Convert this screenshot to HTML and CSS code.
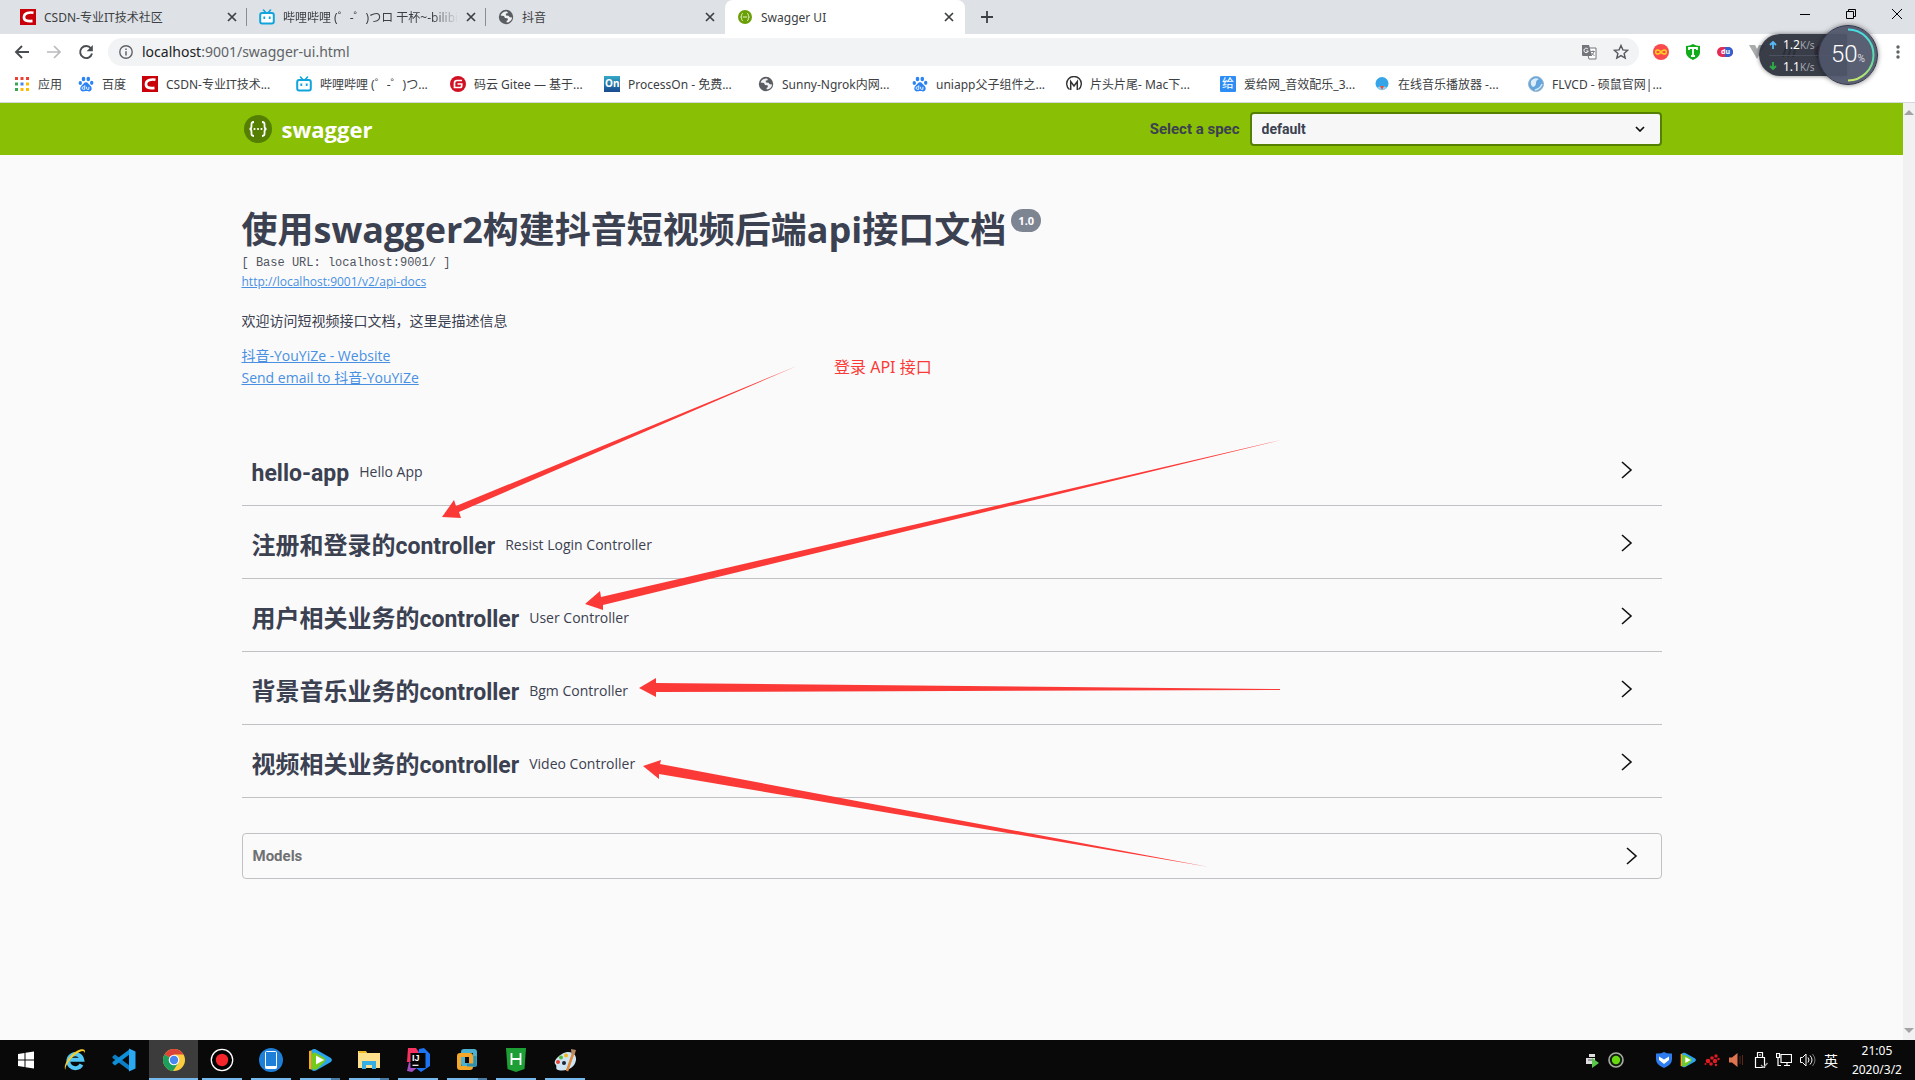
FILE: index.html
```html
<!DOCTYPE html>
<html lang="zh-CN">
<head>
<meta charset="utf-8">
<meta name="viewport" content="width=device-width, initial-scale=1">
<title>Swagger UI</title>
<link rel="stylesheet" href="styles.css">
</head>
<body>
<svg class="defs" aria-hidden="true">
  <defs>
    <symbol id="i-csdn" viewBox="0 0 16 16"><path fill="#c9000a" d="M0 0h16v16H0z"/><path d="M13.500 3.800C9.500 3 4.500 3.800 4 7.600c-.500 4 3 5 8.500 4.300" fill="none" stroke="#fff" stroke-width="2.600"/></symbol>
    <symbol id="i-bili" viewBox="0 0 16 16"><path d="M4.500 1l2 2.300M11.500 1l-2 2.300" stroke="#12a4dc" stroke-width="1.600" stroke-linecap="round"/><rect x="1.200" y="4" width="13.600" height="10.600" rx="2" fill="#fff" stroke="#12a4dc" stroke-width="2"/><path d="M5.300 7.500v2.500M10.700 7.500v2.500" stroke="#12a4dc" stroke-width="1.800"/></symbol>
    <symbol id="i-globe" viewBox="0 0 16 16"><circle cx="8" cy="8" r="7.200" fill="#5a5e63"/><path d="M9 2.500C6 2 3.500 4 2.600 6.500l3.400.4 1 2 2.500.4.500 1.700-1.500 1 .3 1.600c3-.3 5-2.300 5.300-5l-2.300-.4-1.300-1.400-2.500-.3-.3-1.700 2.300-.8z" fill="#fff" opacity=".92"/><path d="M3 9l2.500 1.200.5 2.600z" fill="#5a5e63"/></symbol>
    <symbol id="i-baidu" viewBox="0 0 16 16"><g fill="#2b83f6"><ellipse cx="2.300" cy="7" rx="1.700" ry="2.100"/><ellipse cx="5.500" cy="3" rx="1.800" ry="2.300"/><ellipse cx="10.300" cy="3" rx="1.800" ry="2.300"/><ellipse cx="13.700" cy="6.800" rx="1.700" ry="2.100"/><path d="M8 6.300c2 0 2.700 2 4.200 3.200 2.800 2.300 1.300 6-1.200 5.900-1.300 0-1.600-.4-3-.4s-1.700.4-3 .4c-2.500.1-4-3.600-1.200-5.900C5.300 8.300 6 6.300 8 6.300z"/></g><path d="M6.800 9.300v4H5.300a1.200 1.200 0 010-2.500h1.500M8.600 10.800v1.700q0 .8.800.8h1.500v-2.500" fill="none" stroke="#fff" stroke-width=".9"/></symbol>
    <symbol id="i-x" viewBox="0 0 10 10"><path d="M1 1l8 8M9 1L1 9" stroke="#3c4043" stroke-width="1.700"/></symbol>
    <symbol id="i-player" viewBox="0 0 24 24"><path d="M1 3l4-1v20l-4-1z" fill="#ffae00"/><path d="M3.500 3.500C3.500 1 6 .5 8 1.500L22 9.500c2.500 1.500 2.500 3.500 0 5L8 22.500c-2 1-4.500.5-4.500-2z" fill="#2aa4ee"/><path d="M4 7c0-2 2-3 4-2l8 4.500c2 1.500 2 3.500 0 5L9 21c-2 1-5 1-5-1z" fill="#75cb1c"/><path d="M8 7.500l8 4.500-8 4.500z" fill="#fff"/></symbol>
    <symbol id="i-chevron" viewBox="0 0 12 20"><path d="M1 2l9 8-9 8" fill="none" stroke="#111" stroke-width="1.600"/></symbol>
  </defs>
</svg>

<header class="browser">
  <div class="tabstrip">
    <div class="tab"><svg class="ic"><use href="#i-csdn"/></svg><span class="tab-title">CSDN-专业IT技术社区</span><button class="close" aria-label="关闭"><svg><use href="#i-x"/></svg></button></div>
    <div class="tab"><svg class="ic"><use href="#i-bili"/></svg><span class="tab-title fade">哔哩哔哩 (゜-゜)つロ 干杯~-bilibili</span><button class="close" aria-label="关闭"><svg><use href="#i-x"/></svg></button></div>
    <div class="tab last"><svg class="ic"><use href="#i-globe"/></svg><span class="tab-title">抖音</span><button class="close" aria-label="关闭"><svg><use href="#i-x"/></svg></button></div>
    <div class="tab active"><svg class="ic" viewBox="0 0 16 16"><circle cx="8" cy="8" r="7" fill="#6a9f06"/><path d="M5.800 4.500c-1.500 0-1 1.500-1.200 2.500-.1.600-.5 1-1 1 .5 0 .9.400 1 1 .2 1-.3 2.500 1.200 2.500M10.200 4.500c1.500 0 1 1.500 1.200 2.500.1.600.5 1 1 1-.5 0-.9.400-1 1-.2 1 .3 2.500-1.200 2.500M5.800 8h4.400" fill="none" stroke="#e6f2c8"/></svg><span class="tab-title">Swagger UI</span><button class="close" aria-label="关闭"><svg><use href="#i-x"/></svg></button></div>
    <button class="newtab" aria-label="新标签页"><svg viewBox="0 0 12 12"><path d="M6 0v12M0 6h12" stroke="#3c4043" stroke-width="1.800"/></svg></button>
    <div class="wincontrols">
      <button aria-label="最小化"><svg viewBox="0 0 12 12"><path d="M1 6.500h10" stroke="#000"/></svg></button>
      <button aria-label="还原"><svg viewBox="0 0 12 12"><path d="M1.500 3.500h7v7h-7zM3.500 3.500v-2h7v7h-2" fill="none" stroke="#000"/></svg></button>
      <button aria-label="关闭窗口"><svg viewBox="0 0 12 12"><path d="M1 1l10 10M11 1L1 11" stroke="#000"/></svg></button>
    </div>
  </div>

  <div class="toolbar">
    <button class="nav" aria-label="后退"><svg viewBox="0 0 16 16"><path d="M15 8H2M8 2L2 8l6 6" fill="none" stroke="#4a4d51" stroke-width="1.900"/></svg></button>
    <button class="nav" aria-label="前进"><svg viewBox="0 0 16 16"><path d="M1 8h13M8 2l6 6-6 6" fill="none" stroke="#b9bbbe" stroke-width="1.700"/></svg></button>
    <button class="nav" aria-label="重新加载"><svg viewBox="0 0 16 16"><path d="M13 4.500A6 6 0 1014 9.500" fill="none" stroke="#4a4d51" stroke-width="1.900"/><path d="M14.800 1v6.200H8.600z" fill="#4a4d51"/></svg></button>
    <div class="address">
      <svg class="info-ic" viewBox="0 0 14 14"><circle cx="7" cy="7" r="6.200" fill="none" stroke="#5f6368" stroke-width="1.400"/><path d="M7 6.200V10.500M7 3.500v1.500" stroke="#5f6368" stroke-width="1.500"/></svg>
      <span class="url"><span class="host">localhost</span>:9001/swagger-ui.html</span>
      <svg class="ic" viewBox="0 0 16 16"><path d="M5 4h10v11H8z" fill="#fff" stroke="#72767b"/><path d="M1 1h7l3 11H2Q1 12 1 11z" fill="#72767b"/><path d="M7 5.200A2.200 2.200 0 107.300 7H5.300" fill="none" stroke="#fff"/><path d="M9.800 7.500h4M12 6.500v1M13 7.800q-1 2.500-3 4M10.500 9l3 3" fill="none" stroke="#72767b" stroke-width=".9"/></svg>
      <svg class="ic" viewBox="0 0 16 16"><path d="M8 1.500l1.900 4.400 4.800.4-3.600 3.100 1.100 4.700L8 11.600l-4.200 2.500 1.100-4.700L1.300 6.300l4.800-.4z" fill="none" stroke="#55595e" stroke-width="1.400"/></svg>
    </div>
    <div class="extensions">
      <svg viewBox="0 0 16 16"><circle cx="8" cy="8" r="8" fill="#f94a4d"/><path d="M8 8C6.500 5.500 2.700 5 2.700 8S6.500 10.500 8 8s5.300-3 5.300 0S9.500 10.500 8 8z" fill="none" stroke="#ffd21f" stroke-width="1.500"/></svg>
      <svg viewBox="0 0 16 16"><path d="M1 2q4 0 7-2 3 2 7 2v6c0 4-3 6-7 8-4-2-7-4-7-8z" fill="#12ab1b"/><path d="M4 6V4h8v2M8 4v8M6 12h4" fill="none" stroke="#fff" stroke-width="1.800"/></svg>
      <svg viewBox="0 0 16 16"><rect y="3" width="16" height="10" rx="5" fill="#e52b53"/><path d="M8 3h3a5 5 0 010 10H8z" fill="#2d62d4"/><text x="4" y="10" font-size="7" font-weight="bold" fill="#fff">du</text></svg>
      <svg viewBox="0 0 16 16"><path d="M0 1h6l2 4 2-4h6L8 15z" fill="#a9abad"/></svg>
      <svg viewBox="0 0 16 16"><path d="M2 13L5 3M7 13l3-10M12 13l3-10" stroke="#333" stroke-width="2"/></svg>
      <svg viewBox="0 0 16 16"><circle cx="8" cy="8" r="7" fill="#a3434d"/></svg>
    </div>
    <button class="menu" aria-label="菜单"><svg viewBox="0 0 4 14"><g fill="#5f6368"><circle cx="2" cy="2" r="1.700"/><circle cx="2" cy="7" r="1.700"/><circle cx="2" cy="12" r="1.700"/></g></svg></button>
  </div>

  <nav class="bookmarks">
    <a class="bm short" href="#"><svg class="ic" viewBox="0 0 16 16"><path d="M1 1h3v3H1zM6.500 1h3v3h-3zM12 1h3v3h-3z" fill="#ea4335"/><path d="M1 6.500h3v3H1z" fill="#34a853"/><path d="M6.500 6.500h3v3h-3z" fill="#4285f4"/><path d="M12 6.500h3v3h-3zM12 12h3v3h-3zM6.500 12h3v3h-3z" fill="#fbbc05"/><path d="M1 12h3v3H1z" fill="#34a853"/></svg><span>应用</span></a>
    <a class="bm short" href="#"><svg class="ic"><use href="#i-baidu"/></svg><span>百度</span></a>
    <a class="bm" href="#"><svg class="ic"><use href="#i-csdn"/></svg><span>CSDN-专业IT技术...</span></a>
    <a class="bm" href="#"><svg class="ic"><use href="#i-bili"/></svg><span>哔哩哔哩 (゜-゜)つ...</span></a>
    <a class="bm" href="#"><svg class="ic" viewBox="0 0 16 16"><circle cx="8" cy="8" r="8" fill="#d11123"/><path d="M12 4.500H7Q4.500 4.500 4.500 7v4.500H10q1.700 0 1.700-1.700V8H7.500" fill="none" stroke="#fff" stroke-width="1.700"/></svg><span>码云 Gitee — 基于...</span></a>
    <a class="bm" href="#"><svg class="ic" viewBox="0 0 16 16"><defs><linearGradient id="on" x2="0" y2="1"><stop stop-color="#35a9c6"/><stop offset="1" stop-color="#184a8e"/></linearGradient></defs><path d="M0 0h16v16H0z" fill="url(#on)"/><text x="1" y="11" font-size="10" font-weight="bold" fill="#fff">On</text></svg><span>ProcessOn - 免费...</span></a>
    <a class="bm" href="#"><svg class="ic"><use href="#i-globe"/></svg><span>Sunny-Ngrok内网...</span></a>
    <a class="bm" href="#"><svg class="ic"><use href="#i-baidu"/></svg><span>uniapp父子组件之...</span></a>
    <a class="bm" href="#"><svg class="ic" viewBox="0 0 16 16"><path d="M3.500 13.500A7.300 7.300 0 1112.500 13.500" fill="none" stroke="#333" stroke-width="1.400"/><path d="M4.700 14V5.500L8 10l3.300-4.500V14" fill="none" stroke="#333" stroke-width="1.500"/></svg><span>片头片尾- Mac下...</span></a>
    <a class="bm" href="#"><svg class="ic" viewBox="0 0 16 16"><rect width="16" height="16" rx="1" fill="#2e8df5"/><text x="2" y="12" font-size="12" fill="#fff">给</text></svg><span>爱给网_音效配乐_3...</span></a>
    <a class="bm" href="#"><svg class="ic" viewBox="0 0 16 16"><circle cx="8" cy="7.500" r="6.500" fill="#35a5e8"/><path d="M3 11.500q5-3 10 0Q8 17 3 11.500z" fill="#8fd0f4"/><path d="M6 10h4l-2 4z" fill="#f04b36"/></svg><span>在线音乐播放器 -...</span></a>
    <a class="bm" href="#"><svg class="ic" viewBox="0 0 16 16"><circle cx="8" cy="8" r="7.500" fill="#63a5dc" stroke="#9bb6cd"/><path d="M3 5q3-4 8-2-3 1-3 4t-3 4Q2 9 3 5z" fill="#dceefb"/><path d="M7 14q5-1 7-6" stroke="#cfe7f8" fill="none" stroke-width="1.500"/></svg><span>FLVCD - 硕鼠官网|...</span></a>
  </nav>
</header>

<aside class="netmeter">
  <div class="rates">
    <div class="rate"><svg viewBox="0 0 8 8"><path d="M4 8V1M1 4l3-3 3 3" fill="none" stroke="#57b9f7" stroke-width="1.800"/></svg><span>1.2<small>K/s</small></span></div>
    <div class="rate"><svg viewBox="0 0 8 8"><path d="M4 0v7M1 4l3 3 3-3" fill="none" stroke="#2fae45" stroke-width="1.800"/></svg><span>1.1<small>K/s</small></span></div>
  </div>
  <div class="dial">
    <svg viewBox="0 0 60 60"><defs><linearGradient id="arc" x2="0" y2="1"><stop stop-color="#45e0e6"/><stop offset=".6" stop-color="#5fd9a0"/><stop offset="1" stop-color="#c8e86a"/></linearGradient></defs><circle cx="30" cy="30" r="29.500" fill="#50566a" fill-opacity=".94" stroke="#33374a"/><path d="M30 4.500a25.500 25.500 0 010 51" fill="none" stroke="url(#arc)" stroke-width="2"/></svg>
    <span>50<small>%</small></span>
  </div>
</aside>

<div class="viewport">
  <div class="page">
    <div class="topbar">
      <div class="wrapper topbar-row">
        <a class="logo" href="#"><svg viewBox="0 0 28 28"><circle cx="14" cy="14" r="14" fill="#547f00"/><path d="M10 7c-3 0-2.500 2-2.500 4 0 1.800-.5 3-2 3 1.500 0 2 1.200 2 3 0 2-.5 4 2.500 4M18 7c3 0 2.500 2 2.500 4 0 1.800.5 3 2 3-1.500 0-2 1.200-2 3 0 2 .5 4-2.500 4" fill="none" stroke="#fff" stroke-width="1.800"/><g fill="#fff"><circle cx="10.500" cy="14" r="1.100"/><circle cx="14" cy="14" r="1.100"/><circle cx="17.500" cy="14" r="1.100"/></g></svg><span>swagger</span></a>
        <label class="spec-label" for="spec">Select a spec</label>
        <div class="select-box">
          <select id="spec"><option>default</option></select>
          <svg viewBox="0 0 10 6"><path d="M1 1l4 4 4-4" fill="none" stroke="#111" stroke-width="1.700"/></svg>
        </div>
      </div>
    </div>

    <main class="wrapper">
      <section class="info">
        <div class="title-row"><h1>使用swagger2构建抖音短视频后端api接口文档</h1><span class="version">1.0</span></div>
        <pre class="base-url">[ Base URL: localhost:9001/ ]</pre>
        <a class="docs" href="#">http://localhost:9001/v2/api-docs</a>
        <p class="desc">欢迎访问短视频接口文档，这里是描述信息</p>
        <a class="contact" href="#">抖音-YouYiZe - Website</a>
        <a class="contact" href="#">Send email to 抖音-YouYiZe</a>
      </section>

      <section class="tags">
        <div class="tag"><h2><span>hello-app</span></h2><small>Hello App</small><button aria-label="展开"><svg><use href="#i-chevron"/></svg></button></div>
        <div class="tag"><h2>注册和登录的<span>controller</span></h2><small>Resist Login Controller</small><button aria-label="展开"><svg><use href="#i-chevron"/></svg></button></div>
        <div class="tag"><h2>用户相关业务的<span>controller</span></h2><small>User Controller</small><button aria-label="展开"><svg><use href="#i-chevron"/></svg></button></div>
        <div class="tag"><h2>背景音乐业务的<span>controller</span></h2><small>Bgm Controller</small><button aria-label="展开"><svg><use href="#i-chevron"/></svg></button></div>
        <div class="tag"><h2>视频相关业务的<span>controller</span></h2><small>Video Controller</small><button aria-label="展开"><svg><use href="#i-chevron"/></svg></button></div>
      </section>

      <section class="models"><h2>Models</h2><button aria-label="展开"><svg><use href="#i-chevron"/></svg></button></section>
    </main>

    <svg class="annotations" viewBox="0 0 1200 780" aria-hidden="true">
      <g fill="#fb3a38">
        <path d="M442 414L454 397 456 403 797 263 459 409 461 415z"/>
        <path d="M585 501L600 488 601 494 1281 337 603 502 603 507z"/>
        <path d="M639 585L656 575V580L1280 586V587L656 589V594z"/>
        <path d="M643 663L661 657 660 661 1209 764 659 671 659 676z"/>
      </g>
    </svg>
    <p class="note">登录 API 接口</p>
  </div>
  <div class="scrollbar">
    <svg viewBox="0 0 10 6"><path d="M0 6l5-5 5 5z" fill="#a3a3a3"/></svg>
    <svg viewBox="0 0 10 6"><path d="M0 0l5 5 5-5z" fill="#a3a3a3"/></svg>
  </div>
</div>

<footer class="taskbar">
  <button class="app plain" aria-label="开始"><svg class="start" viewBox="0 0 16 18"><path d="M0 3l6.500-1v6.500H0zM7.500 1.800L16 .5v8H7.500zM0 9.500h6.500V16L0 15zM7.500 9.500H16v8l-8.500-1.300z" fill="#fff"/></svg></button>
  <button class="app plain" aria-label="Internet Explorer"><svg viewBox="0 0 24 24"><path d="M18.500 16.500a7 7 0 11.700-4.700H6" fill="none" stroke="#52c6f4" stroke-width="4"/><path d="M2.500 22C-1 18 8 4 17 1.500c5-1.200 5.500 1 4.500 4 0-3-2-3-5-1.500C9 7.500 1.500 18 2.500 22z" fill="#f8cd2a"/></svg></button>
  <button class="app plain" aria-label="Visual Studio Code"><svg viewBox="0 0 24 24"><path d="M.5 8.500L3 6.500l15 11.500v5L.5 10z" fill="#0d7dc4"/><path d="M.5 15.500L3 17.500 18 6V1L.5 14z" fill="#0e8fd8"/><path d="M17 .5l6.500 3v17l-6.500 3z" fill="#2aa8f2"/></svg></button>
  <button class="app current" aria-label="Chrome"><svg viewBox="0 0 24 24"><circle cx="12" cy="12" r="11" fill="#fbcd3e"/><path d="M12 12L2.500 6.500A11 11 0 0121.500 6.500H12z" fill="#dc4437"/><path d="M2.500 6.500A11 11 0 0011 23l5.500-8.500L12 12z" fill="#1c9f5a"/><circle cx="12" cy="12" r="5.300" fill="#fff"/><circle cx="12" cy="12" r="4.200" fill="#4a87f0"/></svg></button>
  <button class="app" aria-label="录屏"><svg viewBox="0 0 24 24"><circle cx="12" cy="12" r="10.700" fill="#000" stroke="#fff" stroke-width="1.300"/><circle cx="12" cy="12" r="6.200" fill="#f4252b"/></svg></button>
  <button class="app" aria-label="手机助手"><svg viewBox="0 0 24 24"><circle cx="12" cy="12" r="12" fill="#1d7fd8"/><rect x="6.500" y="3.500" width="11" height="17" rx="1" fill="#1d7fd8" stroke="#fff"/><path d="M6.500 18h11v2.500h-11z" fill="#fff"/></svg></button>
  <button class="app multi" aria-label="播放器"><svg><use href="#i-player"/></svg></button>
  <button class="app multi" aria-label="文件资源管理器"><svg viewBox="0 0 24 24"><path d="M1 3h8l1 2h13v15H1z" fill="#fde08b"/><path d="M2 3h7v2H2z" fill="#f1b822"/><path d="M5 21v-8h14v8h-4v-4H9v4z" fill="#37aee3"/></svg></button>
  <button class="app" aria-label="IntelliJ IDEA"><svg viewBox="0 0 24 24"><path d="M2 0h8l4 6-8 8H1z" fill="#f83360"/><path d="M13 1l5-1 6 6v12l-9 6-5-4z" fill="#1c74f3"/><path d="M3 14l9 5-6 5-5-1z" fill="#a050c0"/><path d="M4.500 5h15v15h-15z" fill="#050505"/><text x="6" y="13" font-size="9" font-weight="bold" fill="#fff">IJ</text><path d="M6.500 17.300h6" stroke="#fff" stroke-width="1.200"/></svg></button>
  <button class="app multi" aria-label="VMware"><svg viewBox="0 0 24 24"><rect x="8" y="3" width="12" height="14" rx="1" fill="none" stroke="#4cb0d0" stroke-width="4"/><rect x="4" y="7" width="12" height="13" rx="1" fill="none" stroke="#f5a72a" stroke-width="4"/><path d="M20 8v9h-8" fill="none" stroke="#318fae" stroke-width="3"/></svg></button>
  <button class="app" aria-label="HBuilder X"><svg viewBox="0 0 24 24"><path d="M2 0h20l-1.500 21L12 24l-8.500-3z" fill="#1d9f36"/><path d="M7.500 5v12M16.500 5v12M7.500 11h9" stroke="#fff" stroke-width="1.800"/></svg></button>
  <button class="app" aria-label="画图"><svg viewBox="0 0 24 24"><path d="M9 6c8-5 15 0 14 6-1 8-10 12-18 10-3-1-1-3-2-5-3-2-1-7 6-11z" fill="#cfe4f3"/><circle cx="8" cy="9.500" r="2" fill="#4fbb3d"/><circle cx="13" cy="7.500" r="2" fill="#f4b71c"/><circle cx="5" cy="14" r="2" fill="#e64034"/><circle cx="11" cy="15" r="2" fill="#1c2733"/><path d="M21 3l-7 20" stroke="#de8a3a" stroke-width="2.500"/><path d="M18 1l5 1-1.500 5-3-1z" fill="#b78a5e"/></svg></button>

  <div class="tray">
    <svg viewBox="0 0 16 16"><path d="M5 2h6v3H5zM2 6h9v6H2z" fill="#ddd"/><path d="M4 8h5" stroke="#555"/><path d="M8 6l7 5-7 5z" fill="#59c64b"/></svg>
    <svg viewBox="0 0 16 16"><circle cx="8" cy="8" r="7" fill="#10210a" stroke="#aaa" stroke-width="1.600"/><circle cx="8" cy="8" r="4.200" fill="#68d910"/></svg>
    <span></span>
    <svg viewBox="0 0 16 16"><path d="M0 1.500Q5 2 8 0q3 2 8 1.500V7q0 6-8 9-8-3-8-9z" fill="#2f7cf0"/><path d="M3 4.500l5 3 5-3v3.500l-5 4-5-4z" fill="#fff"/></svg>
    <svg><use href="#i-player"/></svg>
    <svg viewBox="0 0 16 16"><g fill="#e01a22"><circle cx="4" cy="9" r="2.300"/><circle cx="8" cy="6" r="1.800"/><circle cx="11" cy="9" r="2.200"/><circle cx="12" cy="4" r="1.700"/><circle cx="7" cy="12" r="1.800"/><circle cx="14.500" cy="7" r="1.200"/><circle cx="1.500" cy="12" r="1"/><circle cx="12" cy="13" r="1.200"/></g></svg>
    <svg viewBox="0 0 16 16"><path d="M1 5.500h3L9.500 1v14L4 10.500H1z" fill="#e07450"/><path d="M12 4v8M14.500 3v10" stroke="#5b271b"/></svg>
    <svg viewBox="0 0 16 16"><path d="M5.500 5.500v-5h5v5M3.500 5.500h9v10h-9zM7 3h2" fill="none" stroke="#fff" stroke-width="1.200"/><path d="M9 13l2.500 2.500L15.500 11" fill="none" stroke="#aaa" stroke-width="1.300"/></svg>
    <svg viewBox="0 0 16 16"><path d="M5 2.500h10.500v8H5zM8 13.500h6M11 10.500v3M.5 1.500h3v4h-3zM2 5.500v8h3" fill="none" stroke="#fff" stroke-width="1.200"/></svg>
    <svg viewBox="0 0 16 16"><path d="M.5 5.500h2L6 2v12L2.500 10.500h-2z" fill="none" stroke="#fff"/><path d="M8 5.500q2 2.500 0 5M10 3.500q4 4.500 0 9" fill="none" stroke="#fff"/><path d="M12.500 2q5 6 0 12" fill="none" stroke="#777"/></svg>
    <span class="ime">英</span>
    <div class="clock"><span>21:05</span><span>2020/3/2</span></div>
  </div>
</footer>
</body>
</html>
```
FILE: styles.css
```css
* { box-sizing: border-box; }

body {
  margin: 0;
  min-height: 100vh;
  display: flex;
  flex-direction: column;
  position: relative;
  background: #fafafa;
  color: #3b4151;
  font-family: "Open Sans", "Noto Sans CJK SC", sans-serif;
  overflow-x: hidden;
}

button {
  display: flex;
  align-items: center;
  justify-content: center;
  padding: 0;
  border: 0;
  background: none;
}

h1, h2, p, pre { margin: 0; }
.defs { position: absolute; width: 0; height: 0; }
.ic { width: 16px; height: 16px; flex: none; }

/* Browser chrome */
.browser {
  background: #fff;
  border-bottom: 1px solid #d5d8dc;
  font-size: 12px;
  font-family: "Noto Sans", "Noto Sans CJK SC", sans-serif;
}

.tabstrip {
  display: flex;
  height: 34px;
  padding-left: 8px;
  background: #dee1e6;
}

.tab {
  display: flex;
  align-items: center;
  gap: 8px;
  width: 239px;
  padding: 0 10px 0 12px;
  color: #3c4043;
  position: relative;
}
.tab:not(.active):not(.last)::after {
  content: "";
  position: absolute;
  right: 0;
  top: 8px;
  height: 18px;
  border-right: 1px solid #8a8d92;
}
.tab.active { width: 240px; padding-right: 11px; background: #fff; border-radius: 8px 8px 0 0; }
.tab-title { flex: 1; overflow: hidden; white-space: nowrap; }
.fade { mask-image: linear-gradient(to right, #000 85%, transparent); }
.close { width: 10px; height: 16px; }
.close svg { width: 10px; height: 10px; }
.newtab { width: 44px; }
.newtab svg { width: 12px; height: 12px; }
.wincontrols { display: flex; margin-left: auto; height: 28px; }
.wincontrols button { width: 46px; }
.wincontrols button:last-child { width: 36px; margin-left: 5px; }
.wincontrols svg { width: 12px; height: 12px; }

.toolbar {
  display: flex;
  align-items: center;
  height: 36px;
  padding: 0 8px 0 6px;
}
.nav { width: 32px; height: 28px; }
.nav svg { width: 16px; height: 16px; }
.address {
  flex: 1;
  display: flex;
  align-items: center;
  gap: 16px;
  height: 28px;
  margin-left: 6px;
  padding: 0 10px 0 11px;
  border-radius: 14px;
  background: #f1f3f4;
  color: #5f6368;
  font-size: 14px;
}
.info-ic { width: 14px; height: 14px; }
.url { flex: 1; margin-left: -7px; padding-bottom: 2px; }
.host { color: #202124; }
.extensions { display: flex; gap: 16px; margin-left: 14px; width: 236px; }
.extensions svg { width: 16px; height: 16px; }
.extensions text, .bm text { font-family: "Noto Sans", "Noto Sans CJK SC", sans-serif; }
.menu { width: 18px; height: 28px; }
.menu svg { width: 4px; height: 14px; }

.bookmarks {
  display: flex;
  align-items: center;
  height: 32px;
  padding: 0 0 4px 14px;
}
.bm {
  display: flex;
  align-items: center;
  gap: 8px;
  width: 154px;
  color: #3c4043;
  text-decoration: none;
  white-space: nowrap;
}
.bm.short { width: 64px; }

/* Floating network meter */
.netmeter {
  position: absolute;
  top: 25px;
  right: 37px;
  display: flex;
  align-items: center;
  color: #fff;
  font-family: "Noto Sans", sans-serif;
}
.rates {
  width: 88px;
  height: 42px;
  margin-right: -29px;
  padding-left: 10px;
  border-radius: 21px 0 0 21px;
  background: rgba(42, 46, 58, .93);
  box-shadow: 0 0 4px rgba(0, 0, 0, .5);
}
.rate { display: flex; align-items: center; gap: 6px; height: 21px; font-size: 12px; }
.rate + .rate { border-top: 1px solid #4c5060; }
.rate svg { width: 8px; height: 8px; }
.rate small { font-size: 10px; color: #a3a7b1; }
.dial { display: grid; place-items: center; width: 60px; height: 60px; border-radius: 50%; box-shadow: 0 0 5px rgba(0, 0, 0, .5); }
.dial > * { grid-area: 1 / 1; position: relative; }
.dial svg { width: 60px; height: 60px; }
.dial span { padding-bottom: 2px; font-family: Roboto, sans-serif; font-size: 24px; font-weight: 300; }
.dial small { font-size: 10px; }

/* Page area */
.viewport { flex: 1; display: flex; }
.page { flex: 1; min-width: 0; position: relative; }
.wrapper { width: 100%; max-width: 1460px; margin: 0 auto; padding: 0 20px; }
.scrollbar {
  display: flex;
  flex-direction: column;
  justify-content: space-between;
  align-items: center;
  width: 12px;
  padding: 6px 0;
  background: #f1f1f1;
}
.scrollbar svg { width: 10px; height: 6px; }

.topbar { background: #89bf04; }
.topbar-row { display: flex; align-items: center; height: 52px; }
.logo {
  display: flex;
  align-items: center;
  gap: 10px;
  margin: 0 auto 0 2px;
  color: #fff;
  font-size: 22px;
  font-weight: 700;
  text-decoration: none;
}
.logo svg { width: 28px; height: 28px; }
.spec-label { margin-right: 10px; font: 700 15px Roboto, sans-serif; }
.select-box { display: grid; align-items: center; width: 412px; }
.select-box > * { grid-area: 1 / 1; }
.select-box select {
  appearance: none;
  height: 34px;
  padding: 0 10px;
  border: 2px solid #547f00;
  border-radius: 4px;
  background: #f7f7f7;
  color: #3b4151;
  font: 700 14px Roboto, sans-serif;
}
.select-box svg { justify-self: end; width: 10px; height: 6px; margin-right: 17px; pointer-events: none; }

.info { display: flex; flex-direction: column; align-items: flex-start; padding-top: 51px; }
.title-row { display: flex; align-items: flex-start; gap: 5px; }
h1 { font-size: 36px; line-height: 48px; }
.version {
  margin-top: 3px;
  padding: 0 7px;
  border-radius: 12px;
  background: #7d8492;
  color: #fff;
  font-size: 11px;
  font-weight: 700;
  line-height: 23px;
}
.base-url { padding-top: 1px; color: #50555f; font: 12px/16px "Liberation Mono", monospace; }
.docs { margin-top: 2px; font-size: 12px; line-height: 18px; color: #4990e2; }
.desc { margin: 20px 0 14px; font-size: 14px; line-height: 20px; }
.contact { font-size: 14px; line-height: 22px; color: #4990e2; }

.tags { margin-top: 44px; }
.tag {
  display: flex;
  align-items: center;
  height: 73px;
  padding: 2px 29px 0 10px;
  border-bottom: 1px solid #bfc1c5;
}
.tag h2 { padding-top: 6px; font-size: 24px; line-height: 32px; }
.tag h2 span { font-family: Roboto, sans-serif; font-size: 23px; }
.tag small { flex: 1; margin-left: 10px; padding-top: 2px; font-size: 14px; }
.tag svg, .models svg { width: 12px; height: 20px; }
.models {
  display: flex;
  align-items: center;
  justify-content: space-between;
  height: 46px;
  margin: 35px 0;
  padding: 0 23px 0 10px;
  border: 1px solid #bfc1c5;
  border-radius: 4px;
  color: #6f7072;
}
.models h2 { font: 700 15px Roboto, sans-serif; }

/* Hand-drawn notes over the page */
.annotations { position: absolute; left: 0; top: 0; width: 1200px; height: 780px; overflow: visible; pointer-events: none; }
.note {
  position: absolute;
  left: 834px;
  top: 252px;
  color: #fb3a38;
  font-family: "Noto Sans", "Noto Sans CJK SC", sans-serif;
  font-size: 16px;
  line-height: 24px;
}

/* Taskbar */
.taskbar {
  display: flex;
  height: 40px;
  padding-left: 2px;
  background: #090909;
  color: #fff;
  font-family: "Noto Sans", "Noto Sans CJK SC", sans-serif;
}
.app { width: 49px; height: 40px; border: solid transparent; border-width: 0 5px 0 4px; position: relative; }
.app svg { width: 24px; height: 24px; flex: none; }
.app.plain { border-width: 0 2px 0 0; }
.app .start { width: 16px; height: 18px; }
.app:not(.plain)::after {
  content: "";
  position: absolute;
  left: 0;
  right: 0;
  bottom: 0;
  height: 2px;
  background: #76b9ed;
}
.app.multi::after { background: linear-gradient(to right, #76b9ed 31px, #4a7ca5 31px); }
.app.current { border: 0; background: #3c3c3c; }
.tray { display: flex; align-items: center; gap: 8px; margin-left: auto; padding-right: 13px; font-size: 14px; }
.tray svg { width: 16px; height: 16px; }
.tray > span:empty { width: 16px; }
.clock { display: flex; flex-direction: column; align-items: center; margin-left: 6px; font-size: 12px; line-height: 19px; }
```
